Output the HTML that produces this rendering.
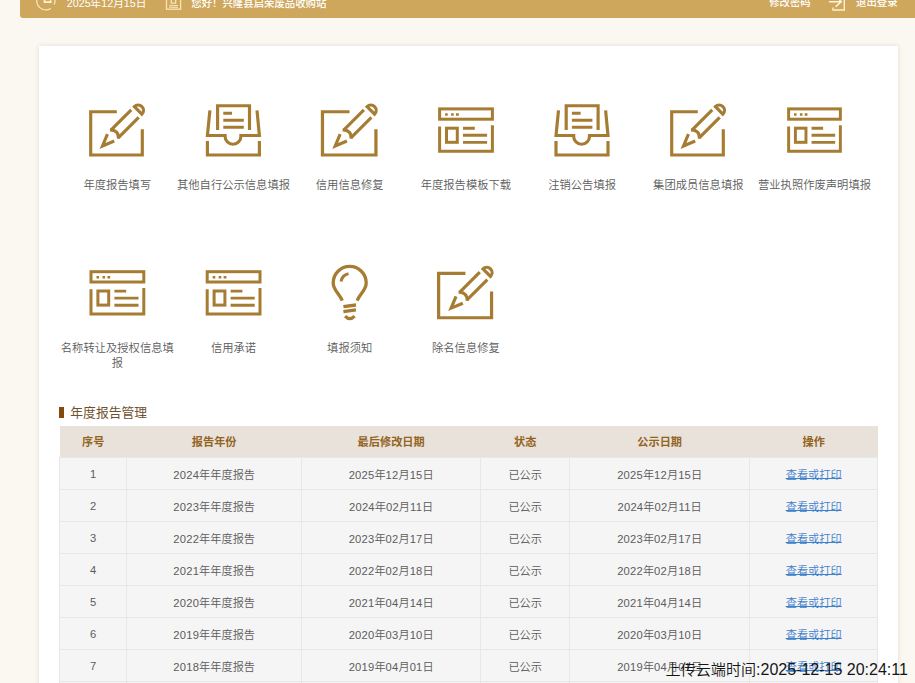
<!DOCTYPE html>
<html lang="zh-CN">
<head>
<meta charset="utf-8">
<title>年度报告管理</title>
<style>
*{box-sizing:border-box;}
html,body{margin:0;padding:0;}
body{width:915px;height:683px;overflow:hidden;position:relative;background:#faf8f0;
  font-family:"Liberation Sans","Noto Sans CJK SC",sans-serif;color:#555;}
.topbar{position:absolute;left:20px;top:0;width:900px;height:17.5px;background:#cea75d;border-bottom-left-radius:3px;}
.topbar span{position:absolute;top:-5.4px;height:17px;line-height:17px;font-size:10.4px;font-weight:500;color:#fff;white-space:nowrap;}
.card{position:absolute;left:39px;top:46px;width:859px;height:700px;background:#fff;box-shadow:0 0 5px rgba(60,50,30,0.13);}
.lbl{position:absolute;width:130px;margin-left:-65px;text-align:center;font-size:11.3px;line-height:15px;color:#5c5c5c;font-weight:350;white-space:nowrap;}
.icons{position:absolute;left:0;top:0;width:915px;height:683px;}
.sec-bar{position:absolute;left:59px;top:406.5px;width:4.6px;height:11.5px;background:#85490c;}
.sec-title{position:absolute;left:70.3px;top:403.8px;height:18px;line-height:18px;font-size:12.8px;color:#70502e;white-space:nowrap;}
table{position:absolute;left:59.2px;top:426.4px;width:818px;border-collapse:collapse;table-layout:fixed;font-size:11.2px;}
th{height:30.8px;background:#e9e2da;color:#93641f;font-weight:bold;padding:0 0 1.2px 0;text-align:center;}
td{height:32px;background:#f5f5f5;border:1px solid #e7e7e7;padding:2.2px 0 0 0;text-align:center;color:#5c5c5c;font-weight:350;}
td i{font-style:normal;letter-spacing:0.2px;}
td a{color:#3d7fcb;text-decoration:underline;text-decoration-thickness:1.3px;text-underline-offset:-1.2px;position:relative;top:-0.7px;text-decoration-skip-ink:none;}
.stamp{position:absolute;left:665.5px;top:659px;height:22px;line-height:22px;font-size:16px;color:#151515;white-space:nowrap;}
.stamp .c{font-size:15.1px;font-weight:350;}
</style>
</head>
<body>

<div class="topbar">
  <span style="left:46.8px;font-weight:normal;font-size:10.7px">2025年12月15日</span>
  <span style="left:171.3px">您好！兴隆县启荣废品收购站</span>
  <span style="left:749.2px;top:-6.4px">修改密码</span>
  <span style="left:836px;top:-6.4px">退出登录</span>
</div>

<div class="card"></div>

<svg class="icons" width="915" height="683" viewBox="0 0 915 683">
  <defs>
    <g id="pbox" fill="none" stroke="#a67c32" stroke-width="3.15" stroke-linejoin="miter">
      <path d="M-0.5,111.7 H-26.6 V155 H25 V129.3"/>
    </g>
    <g id="ppen" fill="none" stroke="#a67c32" stroke-width="3.15" stroke-linejoin="miter">
      <g transform="translate(-17.2,147.8) rotate(-45)">
        <path d="M14.8,-4.4 L3,0.4 L14.8,5.2" stroke-miterlimit="10"/>
        <path d="M20.5,-4.8 H48.8"/>
        <path d="M20.5,5.8 H48.8"/>
        <path d="M19.5,-5.6 Q26,0.5 19.5,6.6"/>
        <path d="M53.3,-4.8 V5.8 A5.3,5.3 0 0 0 53.3,-4.8 Z"/>
      </g>
    </g>
    <g id="pencil"><use href="#pbox"/><use href="#ppen"/></g>
    <g id="tray" fill="none" stroke="#a67c32" stroke-width="3.15">
      <path d="M-15.9,129.9 V105.7 H16 V129.9"/>
      <path d="M-10.2,113.2 H-1.5 M-10.2,120.2 H10.3 M-10.2,127.3 H10.3" stroke-width="2.9"/>
      <path d="M-23.6,110.4 L-26.1,135.5 H-8.4 v0.9 a7.9,7.9 0 0 0 15.8,0 v-0.9 H25.9 L23.5,110.4"/>
      <path d="M-26.1,141.1 V155 H25.9 V141.1"/>
    </g>
    <g id="win" fill="none" stroke="#a67c32" stroke-width="3">
      <rect x="-26.3" y="108.9" width="52.8" height="10.3"/>
      <path d="M-20.8,114.5 h2.6 M-14.8,114.5 h2.6 M-9.9,114.5 h2.8" stroke-width="2.6"/>
      <path d="M-26.3,126.5 V151.2 H26.5 V125.3"/>
      <rect x="-19.4" y="128.2" width="10.8" height="14.1"/>
      <path d="M-2.9,128.3 H8.9 M-2.9,135.3 H21.2 M-2.9,142.4 H21.2" stroke-width="2.9"/>
    </g>
    <g id="bulb" fill="none" stroke="#a67c32" stroke-width="3.3">
      <path d="M-7.4,137.9 C-10.5,130.5 -16.5,127.2 -16.5,120.1 A16.5,16.5 0 0 1 16.5,120.1 C16.5,127.2 10.5,130.5 7.4,137.9"/>
      <path d="M-8.7,118.8 A9.6,9.6 0 0 1 -1.2,110.9" stroke-width="3"/>
      <path d="M-6.3,143.9 L6.3,142.2 M-6.3,148.9 L6.3,147.1" stroke-width="3.3"/>
      <path d="M-4.6,153.3 Q0.1,158.4 4.9,153.3" stroke-width="3.2"/>
    </g>
  </defs>
  <g fill="none" stroke="#f9e6b8" stroke-width="1.25">
    <path d="M50.8,8.4 A9.1,9.1 0 1 1 54.1,4.6"/>
    <path d="M44.6,-6 V2.2 H50.6 V0.2" stroke="#fff3d6" stroke-width="1.8"/>
    <rect x="166.5" y="-8" width="14.1" height="17.2"/>
    <path d="M171.3,-4 V3.1 H175.7 V-4"/>
    <path d="M169.1,5.6 H178 M169.1,7.3 H178" stroke-width="1"/>
    <path d="M833,7.6 V10 H844.3 V-8 H833 V-3" stroke="#fdf0d0" stroke-width="1.4"/>
    <path d="M829,1.7 H840.5 M836,-3.8 L841.3,1.6 L835.6,6.8" stroke="#fff5dd" stroke-width="1.5"/>
  </g>
  <use href="#pencil" x="117.3" y="0"/>
  <use href="#tray" x="233.5" y="0"/>
  <use href="#pbox" transform="translate(349.2,0) scale(1.036,1) translate(0.8,0)"/><use href="#ppen" x="350" y="0"/>
  <use href="#win" x="465.9" y="0"/>
  <use href="#tray" x="582.1" y="0"/>
  <use href="#pencil" x="698.3" y="0"/>
  <use href="#win" transform="translate(814.4,0) scale(0.98,1)"/>
  <use href="#win" x="117.3" y="162.8"/>
  <use href="#win" x="233.5" y="162.8"/>
  <use href="#bulb" x="349.7" y="162.8"/>
  <use href="#pbox" transform="translate(465.1,319.4) scale(1.026) translate(0.8,-156.6)"/><use href="#ppen" x="465.9" y="162.2"/>
</svg>

<div class="lbl" style="left:117.3px;top:178.2px">年度报告填写</div>
<div class="lbl" style="left:233.5px;top:178.2px">其他自行公示信息填报</div>
<div class="lbl" style="left:349.7px;top:178.2px">信用信息修复</div>
<div class="lbl" style="left:465.9px;top:178.2px">年度报告模板下载</div>
<div class="lbl" style="left:582.1px;top:178.2px">注销公告填报</div>
<div class="lbl" style="left:698.3px;top:178.2px">集团成员信息填报</div>
<div class="lbl" style="left:814.5px;top:178.2px">营业执照作废声明填报</div>

<div class="lbl" style="left:117.3px;top:341.1px">名称转让及授权信息填<br>报</div>
<div class="lbl" style="left:233.5px;top:341.1px">信用承诺</div>
<div class="lbl" style="left:349.7px;top:341.1px">填报须知</div>
<div class="lbl" style="left:465.9px;top:341.1px">除名信息修复</div>

<div class="sec-bar"></div>
<div class="sec-title">年度报告管理</div>

<table>
  <colgroup><col style="width:67px"><col style="width:175px"><col style="width:179px"><col style="width:89px"><col style="width:180px"><col style="width:128px"></colgroup>
  <tr><th>序号</th><th>报告年份</th><th>最后修改日期</th><th>状态</th><th>公示日期</th><th>操作</th></tr>
  <tr><td><i>1</i></td><td><i>2024</i>年年度报告</td><td><i>2025</i>年<i>12</i>月<i>15</i>日</td><td>已公示</td><td><i>2025</i>年<i>12</i>月<i>15</i>日</td><td><a>查看或打印</a></td></tr>
  <tr><td><i>2</i></td><td><i>2023</i>年年度报告</td><td><i>2024</i>年<i>02</i>月<i>11</i>日</td><td>已公示</td><td><i>2024</i>年<i>02</i>月<i>11</i>日</td><td><a>查看或打印</a></td></tr>
  <tr><td><i>3</i></td><td><i>2022</i>年年度报告</td><td><i>2023</i>年<i>02</i>月<i>17</i>日</td><td>已公示</td><td><i>2023</i>年<i>02</i>月<i>17</i>日</td><td><a>查看或打印</a></td></tr>
  <tr><td><i>4</i></td><td><i>2021</i>年年度报告</td><td><i>2022</i>年<i>02</i>月<i>18</i>日</td><td>已公示</td><td><i>2022</i>年<i>02</i>月<i>18</i>日</td><td><a>查看或打印</a></td></tr>
  <tr><td><i>5</i></td><td><i>2020</i>年年度报告</td><td><i>2021</i>年<i>04</i>月<i>14</i>日</td><td>已公示</td><td><i>2021</i>年<i>04</i>月<i>14</i>日</td><td><a>查看或打印</a></td></tr>
  <tr><td><i>6</i></td><td><i>2019</i>年年度报告</td><td><i>2020</i>年<i>03</i>月<i>10</i>日</td><td>已公示</td><td><i>2020</i>年<i>03</i>月<i>10</i>日</td><td><a>查看或打印</a></td></tr>
  <tr><td><i>7</i></td><td><i>2018</i>年年度报告</td><td><i>2019</i>年<i>04</i>月<i>01</i>日</td><td>已公示</td><td><i>2019</i>年<i>04</i>月<i>01</i>日</td><td><a>查看或打印</a></td></tr>
  <tr><td><i>8</i></td><td><i>2017</i>年年度报告</td><td><i>2018</i>年<i>03</i>月<i>20</i>日</td><td>已公示</td><td><i>2018</i>年<i>03</i>月<i>20</i>日</td><td><a>查看或打印</a></td></tr>
</table>

<div class="stamp"><span class="c">上传云端时间</span>:2025-12-15 20:24:11</div>

</body>
</html>
